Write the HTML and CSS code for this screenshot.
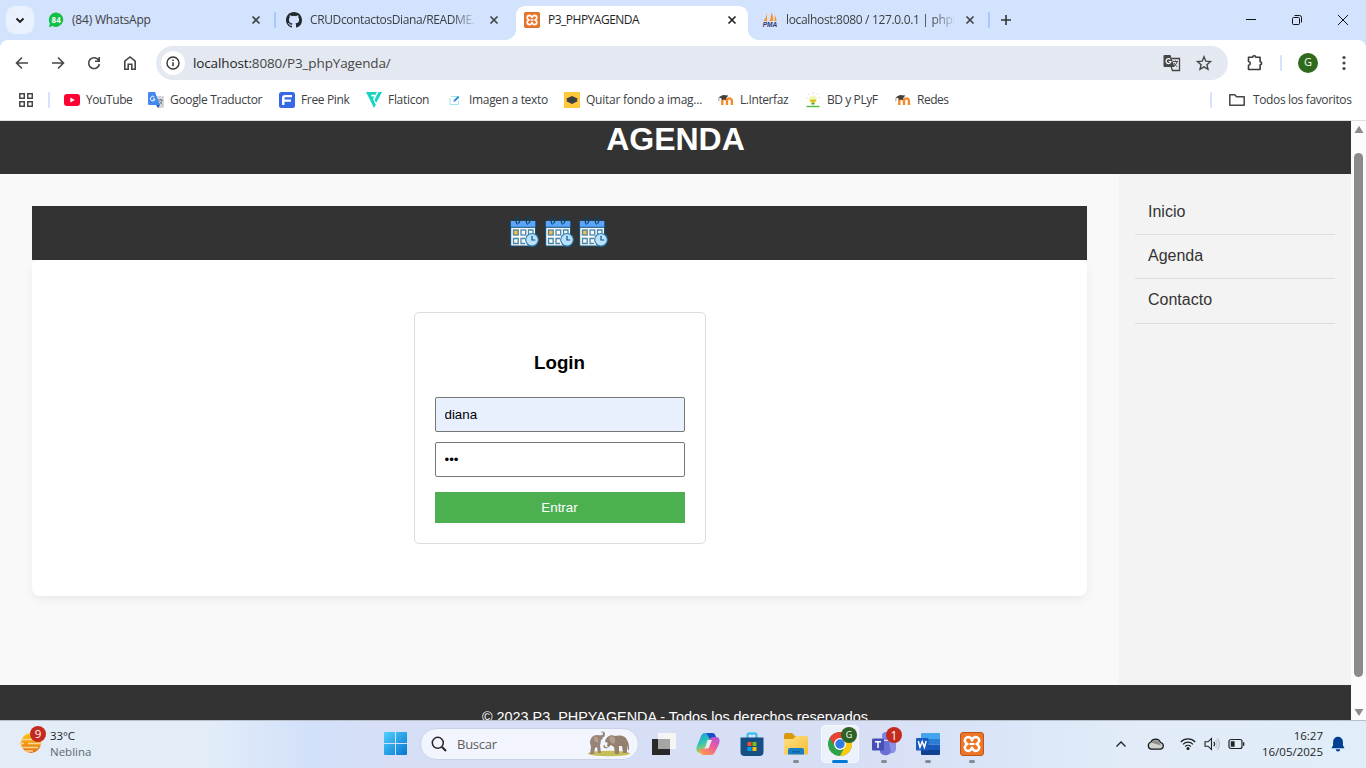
FILE: index.html
```html
<!DOCTYPE html>
<html lang="es">
<head>
<meta charset="utf-8">
<title>P3_PHPYAGENDA</title>
<link rel="stylesheet" href="styles.css">
</head>
<body>
<svg class="defs" width="0" height="0">
  <defs>
    <symbol id="close" viewBox="0 0 10 10"><path d="M1.500 1.500l7 7M8.500 1.500l-7 7" stroke="currentColor" stroke-width="1.600" fill="none"/></symbol>
    <symbol id="xampp" viewBox="0 0 24 24">
      <rect x=".5" y=".5" width="23" height="23" rx="2.500" fill="#ee7426" stroke="#bd5519"/>
      <path d="M12 8.300C12.800 6 14 5 15.800 5A3.500 3.500 0 0 1 19.200 8.500C19.200 10.300 18 11.200 16.500 12C18 12.800 19.200 13.700 19.200 15.500A3.500 3.500 0 0 1 15.800 19C14 19 12.800 18 12 15.700C11.200 18 10 19 8.200 19A3.500 3.500 0 0 1 4.800 15.500C4.800 13.700 6 12.800 7.500 12C6 11.200 4.800 10.300 4.800 8.500A3.500 3.500 0 0 1 8.200 5C10 5 11.200 6 12 8.300z" fill="none" stroke="#fff" stroke-width="2.500" stroke-linejoin="round"/>
      <path d="M9.500 12h5" stroke="#fff" stroke-width="2"/>
    </symbol>
    <symbol id="moodle" viewBox="0 0 16 16">
      <path d="M4.300 13V8.800a2.400 2.400 0 0 1 4.700 0V13M9 13V8.800a2.400 2.400 0 0 1 4.900 0V13" fill="none" stroke="#f58b2e" stroke-width="2.400"/>
      <path d="M.6 5.200L5 3l5.400.6-2.200 2.500-.4 2c-1.400-.9-2.700-.7-4 .2l-.2-1.900z" fill="#44403c"/>
      <path d="M1.200 5.400L.7 9.200" stroke="#777" stroke-width=".7"/>
    </symbol>
    <symbol id="calendar" viewBox="0 0 30 30">
      <rect x="1.600" y="4" width="25" height="25" rx="1" fill="#f7f8fa" stroke="#12537d" stroke-width="1.200"/>
      <path d="M2 4.300h24.200v5.900H2z" fill="#5ba5ff"/><path d="M1.600 10.300h25" stroke="#12537d"/>
      <path d="M8.500 7.500c-1.800-1.500-1.800-7 .6-7s2 6 0 5.500M18.600 7.500c-1.800-1.500-1.800-7 .6-7s2 6 0 5.500" fill="none" stroke="#0d4368" stroke-width="1.200"/>
      <g fill="none" stroke="#4a86a8" stroke-width="1.300"><rect x="4.500" y="13" width="4.700" height="5" fill="#fbba42"/><rect x="12" y="13" width="4.700" height="5"/><path d="M19.500 17v-4h4.500v3M4.500 21.500h4.700v5H4.500zM16 26.500h-4v-5h4"/></g>
      <circle cx="23" cy="22.800" r="6.300" fill="#b9e2ff" stroke="#2877a5" stroke-width="1.100"/>
      <path d="M23 18.700v4.300h3.300" fill="none" stroke="#12537d" stroke-width="1.200"/>
    </symbol>
    <linearGradient id="win" x1="0" y1="0" x2="1" y2="1"><stop stop-color="#4fd0ff"/><stop offset="1" stop-color="#0675ce"/></linearGradient>
    <linearGradient id="sun" x1="0" y1="0" x2="0" y2="1"><stop stop-color="#ffca18"/><stop offset="1" stop-color="#e66c12"/></linearGradient>
    <linearGradient id="fold" x1="0" y1="0" x2="1" y2="1"><stop stop-color="#ffe184"/><stop offset="1" stop-color="#f7bb35"/></linearGradient>
    <linearGradient id="copA" x1="0" y1="0" x2=".5" y2="1"><stop stop-color="#2292ef"/><stop offset=".5" stop-color="#2fc5b1"/><stop offset="1" stop-color="#f5d02c"/></linearGradient>
    <linearGradient id="copB" x1="1" y1="0" x2=".3" y2="1"><stop stop-color="#a854e5"/><stop offset=".5" stop-color="#ee5b9a"/><stop offset="1" stop-color="#ff954f"/></linearGradient>
  </defs>
</svg>

<div class="tabs">
  <div class="tab-menu"><svg width="20" height="20" viewBox="0 0 20 20"><path d="M6.500 8.500L10 12l3.500-3.500" fill="none" stroke="#1f1f1f" stroke-width="1.900"/></svg></div>
  <div class="tab t1">
    <svg class="fav" viewBox="0 0 16 16"><path d="M8 .5A7.200 7.200 0 1 1 4.500 14L.9 15.200l1-3.500A7.400 7.400 0 0 1 8 .5z" fill="#12c044"/><text x="8.200" y="10.900" text-anchor="middle" class="wa">84</text></svg>
    <span class="label l1">(84) WhatsApp</span><svg class="x"><use href="#close"/></svg>
  </div>
  <i class="sep"></i>
  <div class="tab t2">
    <svg class="fav" viewBox="0 0 16 16"><path fill="#24292f" d="M8 0C3.580 0 0 3.580 0 8c0 3.540 2.290 6.530 5.470 7.590.4.070.55-.17.55-.38 0-.19-.01-.82-.01-1.490-2.010.37-2.530-.49-2.690-.94-.09-.23-.48-.94-.82-1.130-.28-.15-.68-.52-.01-.53.630-.01 1.080.58 1.230.82.720 1.210 1.870.87 2.330.66.070-.52.280-.87.510-1.070-1.780-.2-3.640-.89-3.640-3.950 0-.87.310-1.590.82-2.150-.08-.2-.36-1.020.08-2.120 0 0 .67-.21 2.200.82a7.600 7.600 0 0 1 4 0c1.530-1.040 2.200-.82 2.200-.82.440 1.100.160 1.920.080 2.120.510.560.820 1.270.820 2.150 0 3.070-1.870 3.750-3.650 3.950.290.250.540.730.540 1.480 0 1.070-.01 1.930-.01 2.200 0 .21.150.46.550.38A8 8 0 0 0 16 8c0-4.420-3.580-8-8-8z"/></svg>
    <span class="label l2 fade">CRUDcontactosDiana/README.</span><svg class="x"><use href="#close"/></svg>
  </div>
  <div class="tab t3 active">
    <svg class="fav"><use href="#xampp"/></svg>
    <span class="label l3">P3_PHPYAGENDA</span><svg class="x"><use href="#close"/></svg>
  </div>
  <div class="tab t4">
    <svg class="fav" viewBox="0 0 16 16"><path d="M5 1v8H1.500C3.500 7 4.500 4 5 1zM9.300 0c1.500 3 2.400 6 1.800 9H7.300c1.700-2.500 2-6 2-9zM12.500 3c1.400 2 2 4 1.900 6h-2c.7-2 .5-4 .1-6z" fill="#f79424"/><text x="8" y="15" text-anchor="middle" class="pma">PMA</text></svg>
    <span class="label l4 fade">localhost:8080 / 127.0.0.1 | phpM</span><svg class="x"><use href="#close"/></svg>
  </div>
  <i class="sep"></i>
  <svg class="plus" viewBox="0 0 12 12"><path d="M6 1v10M1 6h10" stroke="#333" stroke-width="1.600"/></svg>
  <div class="winbtns">
    <svg viewBox="0 0 12 12"><path d="M1 5.500h10" stroke="#111"/></svg>
    <svg viewBox="0 0 12 12"><rect x="1.500" y="3.500" width="7" height="7" rx="1" fill="none" stroke="#111"/><path d="M3.500 1.500h5a2 2 0 0 1 2 2v5" fill="none" stroke="#111"/></svg>
    <svg viewBox="0 0 12 12"><path d="M1 1l10 10M11 1L1 11" stroke="#111"/></svg>
  </div>
</div>

<div class="chrome">
  <div class="toolbar">
    <svg class="nav" viewBox="0 0 16 16"><path d="M14 8H3M8 2.500L2.500 8 8 13.500"/></svg>
    <svg class="nav" viewBox="0 0 16 16"><path d="M2 8h11M8 2.500L13.500 8 8 13.500"/></svg>
    <svg class="nav" viewBox="0 0 16 16"><path d="M12.800 5.500A5.400 5.400 0 1 0 13.400 9M13.200 2v4.200H9"/></svg>
    <svg class="nav" viewBox="0 0 16 16"><path d="M2.800 6.200L8 2l5.200 4.200v8H9.800V9.300H6.200v4.900H2.800z"/></svg>
    <div class="omnibox">
      <span class="info"><svg viewBox="0 0 16 16"><circle cx="8" cy="8" r="6" fill="none" stroke="#333" stroke-width="1.400"/><path d="M8 7.300v4M8 4.400v1.500" stroke="#333" stroke-width="1.500"/></svg></span>
      <span class="url"><b>localhost:</b>8080/P3_phpYagenda/</span>
      <svg class="translate" viewBox="0 0 18 18"><path d="M1.500 1h6l4 12h-10A1 1 0 0 1 .5 12V2a1 1 0 0 1 1-1z" fill="#444746"/><path d="M8.500 4.500h8v12H9.500L8.200 13" fill="none" stroke="#444746" stroke-width="1.300"/><path d="M10 7.500h5M12.500 6.500v1M14 7.500c-.3 2-1.500 3.500-3 4.500M11 9c1 2 2 3 3.300 3.800" stroke="#444746" fill="none"/><path d="M7.400 5.400A2.500 2.500 0 1 0 8 7.500H5.700" stroke="#fff" stroke-width="1.200" fill="none"/></svg>
      <svg class="star" viewBox="0 0 16 16"><path d="M8 1.800l1.800 4.400 4.700.4-3.600 3.100 1.100 4.600L8 11.800l-4 2.500 1.100-4.600-3.600-3.100 4.700-.4z" fill="none" stroke="#444746" stroke-width="1.400"/></svg>
    </div>
    <svg class="puzzle" viewBox="0 0 18 18"><path d="M2.500 3.300h4.200c0-2 3-2 3 0h4.400v4.400c2 0 2 3 0 3v4.800H2.500v-4.200c2.300-.3 2.300-3.500 0-3.800z" fill="none" stroke="#3c3c3c" stroke-width="1.600" stroke-linejoin="round"/></svg>
    <i class="sep pale"></i>
    <span class="avatar">G</span>
    <svg class="dots" viewBox="0 0 4 16"><circle cx="2" cy="2.500" r="1.600"/><circle cx="2" cy="8" r="1.600"/><circle cx="2" cy="13.500" r="1.600"/></svg>
  </div>
  <div class="bookmarks">
    <svg class="apps" viewBox="0 0 14 14" fill="none" stroke="#444746" stroke-width="1.500"><path d="M.8.8h4.500v4.500H.8zM8.800.8h4.500v4.500H8.800zM.8 8.800h4.500v4.500H.8zM8.800 8.800h4.500v4.500H8.800z"/></svg>
    <i class="sep pale"></i>
    <div class="bm b1"><svg viewBox="0 0 16 16"><rect y="2" width="16" height="12" rx="3" fill="#f03"/><path d="M6.300 5.500L10.800 8l-4.500 2.500z" fill="#fff"/></svg><span>YouTube</span></div>
    <div class="bm b2"><svg viewBox="0 0 16 16"><path d="M7 4h8a1 1 0 0 1 1 1v10a1 1 0 0 1-1 1h-5z" fill="#d5d7da"/><path d="M1 0h6l5 13H1a1 1 0 0 1-1-1V1a1 1 0 0 1 1-1z" fill="#4688f1"/><path d="M8 13h4l-2 3z" fill="#2659b8"/><path d="M6.300 5A2.300 2.300 0 1 0 7 7H4.800" stroke="#fff" fill="none"/><path d="M10 8h5M12.500 7v1M14 8c-.3 2-1.500 3.500-2.600 4M11.500 9.500l3 3" stroke="#667883" stroke-width=".9" fill="none"/></svg><span>Google Traductor</span></div>
    <div class="bm b3"><svg viewBox="0 0 16 16"><rect width="16" height="16" rx="2.500" fill="#3668e8"/><path d="M3 13V6a3 3 0 0 1 3-3h7v2.300H6.500a1 1 0 0 0-1 1v1.200H12v2.300H5.500V13z" fill="#fff"/></svg><span>Free Pink</span></div>
    <div class="bm b4"><svg viewBox="0 0 16 16"><path d="M0 0h11L9.500 2.800H4.800l1 1.800h2.600L7 7.300l2.800 5.500L8 16zM12.500 0H16L10.200 11 8.500 7.800z" fill="#17d3c2"/></svg><span>Flaticon</span></div>
    <div class="bm b5"><svg viewBox="0 0 16 16"><path d="M4 4.500h7.500M3 6v6.500h8.500V9" fill="none" stroke="#9be5f3"/><path d="M6.500 9.800l.4-1.800L11 3.900l1.400 1.400-4.100 4z" fill="#2388df"/></svg><span>Imagen a texto</span></div>
    <div class="bm b6"><svg viewBox="0 0 16 16"><path fill="#ffc83d" d="M0 0h16v16H0z"/><path d="M8 4l6 2.700-1.500 1.200L14 9.100 8 12 2 9.100l1.500-1.200L2 6.700z" fill="#3d3e42"/></svg><span>Quitar fondo a imag...</span></div>
    <div class="bm b7"><svg><use href="#moodle"/></svg><span>L.Interfaz</span></div>
    <div class="bm b8"><svg viewBox="0 0 16 16"><path d="M1.500 14.500h13" stroke="#58bf45" stroke-width="1.500"/><path d="M4 3L3 1.500M8 2V0M12 3l1-1.500M2.500 6L1 5.500M13.500 6l1.500-.5" stroke="#fbcbc5"/><circle cx="8" cy="7.500" r="4" fill="#f5f5c4"/><path d="M5 7.500h6c0 4.500-6 4.500-6 0z" fill="#d5c51c"/><path d="M6.500 11h3v1.500h-3z" fill="#4f9e38"/></svg><span>BD y PLyF</span></div>
    <div class="bm b9"><svg><use href="#moodle"/></svg><span>Redes</span></div>
    <i class="sep pale right"></i>
    <svg class="folder" viewBox="0 0 18 16"><path d="M1.800 2.800h5l1.800 2h7.600v8.500H1.800z" fill="none" stroke="#444746" stroke-width="1.500" stroke-linejoin="round"/></svg>
    <span class="allfav">Todos los favoritos</span>
  </div>
</div>

<div class="viewport">
  <div class="page">
    <header class="head"><h1>AGENDA</h1></header>
    <div class="body">
      <main class="main">
        <div class="strip"><svg><use href="#calendar"/></svg><svg><use href="#calendar"/></svg><svg><use href="#calendar"/></svg></div>
        <section class="card">
          <form class="login">
            <h3>Login</h3>
            <input class="user" type="text" value="diana">
            <input class="pass" type="password" value="123">
            <button type="button">Entrar</button>
          </form>
        </section>
      </main>
      <nav class="side"><a>Inicio</a><a>Agenda</a><a>Contacto</a></nav>
    </div>
    <footer class="foot">© 2023 P3_PHPYAGENDA - Todos los derechos reservados.</footer>
  </div>
  <div class="scroll"><svg viewBox="0 0 10 8"><path d="M5 .8L9.500 8H.5z"/></svg><i></i><svg viewBox="0 0 10 8"><path d="M.5 0h9L5 7z"/></svg></div>
</div>

<div class="taskbar">
  <div class="weather">
    <svg width="28" height="30" viewBox="0 0 28 30"><circle cx="13" cy="17" r="10" fill="url(#sun)"/><path d="M4 13.500h11M10 17.500h14M1 17.500h5M3 21.500h17M7 25h8" stroke="#f7d795" stroke-width="1.500"/><circle cx="20" cy="8" r="8" fill="#c42b1c"/><text x="20" y="12" text-anchor="middle" class="badge">9</text></svg>
    <p><span>33°C</span><span class="dim">Neblina</span></p>
  </div>
  <div class="dock">
    <svg class="start" viewBox="0 0 23 23"><path d="M0 1a1 1 0 0 1 1-1h10v11H0zM12 0h10a1 1 0 0 1 1 1v10H12zM0 12h11v11H1a1 1 0 0 1-1-1zM12 12h11v10a1 1 0 0 1-1 1H12z" fill="url(#win)"/></svg>
    <div class="search">
      <svg class="lens" viewBox="0 0 16 16"><circle cx="6.800" cy="6.800" r="5.500" fill="none" stroke="#252525" stroke-width="1.500"/><path d="M11 11l4 4" stroke="#252525" stroke-width="1.900"/></svg>
      <span>Buscar</span>
      <svg class="elephants" viewBox="0 0 44 26"><ellipse cx="22" cy="22.500" rx="21" ry="2.800" fill="#c5bd55"/>
        <path d="M3 12c0-5 3-8 7-8 3 0 5 1 6-1 .5-1.500-1-2-2-1.300C14 0 18-.5 18 3c0 3-2 5-4 6-.5 2 0 3-1 5l1 8h-3l-1-6-2 1-1 6H3l1-7z" fill="#988578"/><path d="M7 6c3-1 5 1 4 5-2 1-4 0-4-5z" fill="#b39e90"/>
        <path d="M18 11c1-6 6-8 10-6 4-1 10-1 12 4 2 3 2 6 2 10h-1l-1-5 0 8h-4l-1-7h-3l0 8h-4l-1-7-3-2c-3 2-3 4-6 3-2-.5-2-3-.5-3l1 1.500c2-.5 2-2 2-4z" fill="#93806f"/><path d="M22 6c4-2 7 0 6 5-1 3-5 2-6-5z" fill="#b19c8e"/><path d="M15.500 7l4-1M18 15l3 1" stroke="#fff" stroke-width="1"/></svg>
    </div>
    <svg class="ic view" viewBox="0 0 26 26"><path d="M1 8h18v16H1z" fill="#292929"/><path d="M7 2h18v16H7z" fill="#f5f5f5"/><path d="M7 8h12v10H7z" fill="#a5a5a5"/></svg>
    <svg class="ic copilot" viewBox="0 0 26 26"><path d="M10 2h7c2 0 3 1 3.500 3L22 8h-4c-2 0-3 1-4 4l-2.500 7c-.8 2-2 3-4 3H5c-4 0-4-4-3-7L6 5c1-2 2-3 4-3z" fill="url(#copA)"/><path d="M10 2h7c2 0 3 1 3.500 3L22 8h-5c-2 0-3-.5-4-3s-1.500-3-3-3z" fill="#174fca"/><path d="M16 24H9c-2 0-3-1-4-4l-1-2h4c2 0 3-1 4-4l2.500-5c.8-2 2-3 4-3H21c4 0 4 4 3 7l-4 8c-1 2-2 3-4 3z" fill="url(#copB)"/><path d="M12.500 9h4.500l-3.500 8.500H9c2-1 2-4 3.500-8.500z" fill="#e8ecfa"/></svg>
    <svg class="ic store" viewBox="0 0 26 26"><path d="M8.500 7V4a1.500 1.500 0 0 1 1.500-1.500h6A1.500 1.500 0 0 1 17.500 4v3" fill="none" stroke="#27bdf2" stroke-width="2"/><path d="M1.500 6.500h23V21a4 4 0 0 1-4 4h-15a4 4 0 0 1-4-4z" fill="#154f84"/><path d="M8.500 11h4v4h-4z" fill="#f65321"/><path d="M13.500 11h4v4h-4z" fill="#7fbb10"/><path d="M8.500 16h4v4h-4z" fill="#00a2ed"/><path d="M13.500 16h4v4h-4z" fill="#ffba07"/></svg>
    <svg class="ic explorer" viewBox="0 0 26 26"><path d="M1 4a2 2 0 0 1 2-2h6l3 3h11v5H1z" fill="#d89910"/><path d="M1 8h9l3-3h10a2 2 0 0 1 2 2v15a1.500 1.500 0 0 1-1.500 1.500h-21A1.500 1.500 0 0 1 1 22z" fill="url(#fold)"/><path d="M5 23.500V19a2 2 0 0 1 2-2h12a2 2 0 0 1 2 2v4.500z" fill="#187fc5"/><path d="M9 20h8v1.500H9z" fill="#08609d"/></svg>
    <div class="cell"><svg class="ic chrome-ic" viewBox="0 0 26 26"><circle cx="13" cy="13" r="12" fill="#2fa34c"/><path d="M2.600 7A12 12 0 0 1 23.400 7L13 8.500 8.300 15.500z" fill="#e94235"/><path d="M23.400 7A12 12 0 0 1 13 25l5-9.500L17.500 8z" fill="#fdc914"/><path d="M13 7h10.400l-1-1.500z" fill="#e94235"/><circle cx="13" cy="13" r="6" fill="#fff"/><circle cx="13" cy="13" r="4.700" fill="#317be9"/></svg><span class="mini">G</span></div>
    <div class="cell2"><svg class="ic teams" viewBox="0 0 26 26"><circle cx="15" cy="5" r="4" fill="#7b83eb"/><path d="M9 10h12v9a6.500 6.500 0 0 1-12 2z" fill="#6971d5"/><path d="M18 10h7v8a4 4 0 0 1-5 4z" fill="#8990e5"/><rect x="1" y="7.500" width="12" height="12" rx="1.200" fill="#464eb8"/><path d="M4 10.700h6M7 10.700v6.300" stroke="#fff" stroke-width="1.500"/></svg><span class="one">1</span></div>
    <svg class="ic word" viewBox="0 0 26 26"><path d="M7 2h17a1 1 0 0 1 1 1v5H6V3a1 1 0 0 1 1-1z" fill="#42a5ee"/><path d="M6 8h19v5.500H6z" fill="#2b7cd3"/><path d="M6 13.500h19V19H6z" fill="#185abd"/><path d="M6 19h19v4a1 1 0 0 1-1 1H7a1 1 0 0 1-1-1z" fill="#103f91"/><rect x="1" y="7" width="12.500" height="12.500" rx="1" fill="#185abd"/><path d="M3.300 10l1.700 6.300L7.200 10.500l2.200 5.800L11.200 10" fill="none" stroke="#fff" stroke-width="1.500"/></svg>
    <svg class="ic xam" viewBox="-1 -1 26 26"><use href="#xampp" width="24" height="24"/></svg>
  </div>
  <div class="marks"><i></i><i class="on"></i><i></i><i></i><i></i></div>
  <div class="tray">
    <svg class="up" viewBox="0 0 12 8"><path d="M1.500 6.500L6 2l4.500 4.500" fill="none" stroke="#1f1f1f" stroke-width="1.300"/></svg>
    <svg class="cloud" viewBox="0 0 18 14"><path d="M4.500 12.200a3.700 3.700 0 0 1-.6-7.200 5.200 5.200 0 0 1 9.600.5 3.400 3.400 0 0 1 0 6.700z" fill="#d1d1d1" stroke="#171717" stroke-width="1.200"/><path d="M4 5.500a5 5 0 0 1 8.800.2L14 8.500z" fill="#8e8e8e"/></svg>
    <svg class="wifi" viewBox="0 0 16 14" fill="none" stroke="#222" stroke-width="1.200"><path d="M.8 5a10 10 0 0 1 14.400 0M3 7.300a7 7 0 0 1 10 0M5.200 9.500a4 4 0 0 1 5.600 0"/><circle cx="8" cy="11.500" r="1" fill="#222"/></svg>
    <svg class="vol" viewBox="0 0 16 14" fill="none" stroke="#222" stroke-width="1.100"><path d="M1 4.800h3L7.500 1.500v11L4 9.200H1zM9.700 4.800a3.300 3.300 0 0 1 0 4.400"/><path d="M11.500 3a6 6 0 0 1 0 8M13.300 1.300a8.500 8.500 0 0 1 0 11.400" stroke="#b4bbc2"/></svg>
    <svg class="bat" viewBox="0 0 17 12"><rect x="1" y="1.500" width="13" height="9" rx="2" fill="none" stroke="#222" stroke-width="1.200"/><path d="M2.800 3.300h3.800v5.400H2.800zM15 4.300h1.300v3.400H15z" fill="#222"/></svg>
    <p><span>16:27</span><span>16/05/2025</span></p>
    <svg class="bell" viewBox="0 0 14 16"><path d="M7 .8a4.900 4.900 0 0 1 4.900 4.900v3.600l1.600 3H.5l1.600-3V5.700A4.900 4.900 0 0 1 7 .8zM4.800 13.300h4.400a2.200 2.200 0 0 1-4.400 0z" fill="#003e92"/></svg>
  </div>
</div>
</body>
</html>
```
FILE: styles.css
```css
* { box-sizing: border-box; }
body { margin: 0; width: 1366px; height: 768px; overflow: hidden; display: flex; flex-direction: column; background: #d3e2fd; font: 12px "Open Sans", "Noto Sans", sans-serif; color: #3c4043; }
svg { display: block; flex: none; }
p, h1, h3 { margin: 0; }
.defs { position: absolute; }

/* Tab strip */
.tabs { height: 40px; flex: none; display: flex; align-items: center; padding-left: 6px; }
.tab-menu { width: 28px; height: 28px; border-radius: 9px; background: #eaf1fe; display: grid; place-items: center; margin-right: 14px; }
.tab { display: flex; align-items: center; height: 34px; }
.t1 { width: 226px; }
.t2 { width: 240px; padding-left: 10px; }
.t3 { width: 232px; padding-left: 8px; }
.t4 { width: 240px; padding-left: 14px; }
.tab .x { width: 10px; height: 10px; color: #3c4043; }
.fav { width: 16px; height: 16px; margin-right: 8px; }
.label { white-space: nowrap; height: 18px; line-height: 18px; flex: none; }
.l1 { width: 179px; letter-spacing: -.2px; }
.l2 { width: 165px; margin-right: 14px; letter-spacing: -.38px; }
.l3 { width: 179px; letter-spacing: -.5px; }
.l4 { width: 168px; margin-right: 11px; letter-spacing: -.33px; }
.fade { -webkit-mask-image: linear-gradient(90deg, #000 86%, transparent 102%); mask-image: linear-gradient(90deg, #000 86%, transparent 102%); }
.active { height: 34px; margin-top: 6px; padding-bottom: 6px; background: #fff; border-radius: 9px 9px 0 0; color: #1f1f1f; position: relative; }
.active .x { color: #1f1f1f; }
.active::before, .active::after { content: ""; position: absolute; bottom: 0; width: 10px; height: 10px; }
.active::before { left: -10px; background: radial-gradient(circle at 0 0, transparent 9.5px, #fff 10px); }
.active::after { right: -10px; background: radial-gradient(circle at 100% 0, transparent 9.5px, #fff 10px); }
.sep { width: 2px; height: 16px; background: #a8c7fa; flex: none; border-radius: 1px; }
.pale { background: #d3e3fd; }
.plus { width: 12px; height: 12px; margin-left: 10px; }
.winbtns { display: flex; gap: 34px; margin-left: auto; margin-right: 17px; }
.winbtns svg { width: 12px; height: 12px; }
.wa { font: bold 8px "Open Sans", sans-serif; fill: #fff; }
.pma { font: italic bold 6.5px "Liberation Sans", sans-serif; fill: #34366c; }

/* Toolbar and bookmarks */
.chrome { height: 81px; flex: none; background: #fff; border-radius: 8px 8px 0 0; border-bottom: 1px solid #dedfe1; }
.toolbar { height: 46px; display: flex; align-items: center; padding-left: 14px; }
.nav { width: 16px; height: 16px; margin-right: 20px; fill: none; stroke: #444746; stroke-width: 1.6; }
.omnibox { width: 1072px; height: 34px; border-radius: 17px; background: #e4e8f1; display: flex; align-items: center; margin-left: -2px; padding-left: 5px; flex: none; }
.info { width: 24px; height: 24px; border-radius: 50%; background: #fff; display: grid; place-items: center; }
.info svg { width: 16px; height: 16px; }
.url { font-size: 13.5px; letter-spacing: -.13px; margin-left: 8px; width: 970px; color: #474747; line-height: 20px; }
.url b { font-weight: 400; color: #1f1f1f; }
.translate { width: 18px; height: 18px; }
.star { width: 16px; height: 16px; margin-left: 15px; }
.puzzle { width: 18px; height: 18px; margin-left: 18px; }
.toolbar .sep { margin-left: 16px; }
.avatar { width: 20px; height: 20px; border-radius: 50%; background: #2f6a1d; color: #fff; font-size: 11px; line-height: 18px; text-align: center; margin-left: 16px; }
.dots { width: 4px; height: 16px; margin-left: 24px; fill: #444746; }
.bookmarks { height: 28px; display: flex; align-items: center; padding-left: 19px; }
.apps { width: 14px; height: 14px; margin-right: 15px; }
.bookmarks .sep { margin-right: 14px; }
.bm { display: flex; align-items: center; gap: 6px; flex: none; white-space: nowrap; line-height: 16px; }
.bm svg { width: 16px; height: 16px; }
.b1 { width: 84px; letter-spacing: -.42px; }
.b2 { width: 131px; letter-spacing: -.34px; }
.b3 { width: 87px; letter-spacing: -.34px; }
.b4 { width: 81px; letter-spacing: -.3px; }
.b5 { width: 117px; letter-spacing: -.33px; }
.b6 { width: 154px; letter-spacing: -.25px; }
.b7 { width: 87px; letter-spacing: -.42px; }
.b8 { width: 90px; letter-spacing: -.42px; }
.b9 { width: 60px; letter-spacing: -.5px; }
.bookmarks .right { margin-left: auto; margin-right: 16px; }
.folder { width: 18px; height: 16px; margin-right: 7px; }
.allfav { width: 113px; white-space: nowrap; letter-spacing: -.36px; line-height: 15px; margin-top: -1px; }

/* Web page */
.viewport { height: 599px; flex: none; display: flex; overflow: hidden; background: #f9f9f9; }
.page { width: 1351px; height: 599px; font-family: "Liberation Sans", Arial, sans-serif; display: flex; flex-direction: column; }
.head { height: 53px; flex: none; background: #333; color: #fff; text-align: center; }
.head h1 { font-size: 32px; line-height: 36px; }
.body { height: 511px; flex: none; display: flex; }
.main { width: 1119px; padding: 32px; }
.strip { height: 54px; background: #333; display: flex; justify-content: center; align-items: center; gap: 4.5px; padding: 0 2px 2px 0; }
.strip svg { width: 30px; height: 30px; }
.card { height: 336px; background: #fff; border-radius: 8px; box-shadow: 0 4px 10px rgba(0, 0, 0, .06); padding-top: 52px; }
.login { width: 292px; height: 232px; margin: 0 auto; border: 1px solid #ddd; border-radius: 5px; padding: 39px 20px 20px; color: #000; }
.login h3 { font-size: 18.72px; line-height: 22px; text-align: center; margin-bottom: 23px; }
.login input { display: block; width: 250px; height: 35px; margin: 0 0 10px; border: 1px solid #767676; border-radius: 2px; padding: 0 9px; font: 13.33px "Liberation Sans", Arial, sans-serif; color: #000; background: #fff; }
.login .user { background: #e8f0fe; }
.login .pass { margin-bottom: 15px; }
.login button { display: block; width: 250px; height: 31px; border: 0; background: #4caf50; color: #fff; font: 13.33px "Liberation Sans", Arial, sans-serif; }
.side { width: 232px; background: #f3f3f3; padding: 16.5px 16px; }
.side a { display: block; height: 44.4px; border-bottom: 1px solid #ddd; padding-left: 13px; font-size: 16px; line-height: 42px; color: #333; }
.foot { height: 35px; background: #333; color: #fff; text-align: center; font-size: 14.4px; line-height: 18px; padding: 23px 0 0 3px; flex: none; }
.scroll { width: 15px; background: #fcfcfc; display: flex; flex-direction: column; align-items: center; padding: 4px 0 3px; }
.scroll svg { width: 10px; height: 8px; fill: #8b8b8b; }
.scroll i { width: 9px; height: 524px; margin: 20px 0 auto; border-radius: 5px; background: #8b8b8b; }

/* Taskbar */
.taskbar { height: 48px; flex: none; border-top: 1px solid #b9bfca; background: linear-gradient(90deg, #e2edf7 0, #e2edf8 210px, #d2e0fa 310px, #d6dff6 380px, #d7dff5 860px, #dae5f8 1000px, #e1ecf8 1120px, #e1edf8); display: flex; position: relative; color: #1e1e1e; padding-bottom: 2px; }
.weather { width: 383px; display: flex; padding: 5px 0 0 11px; }
.weather svg { margin: 0 0 0 7px; }
.weather p { display: flex; flex-direction: column; margin: 2px 0 0 4px; font-size: 11.5px; line-height: 16px; letter-spacing: -.1px; }
.weather .dim { color: #606870; letter-spacing: 0; }
.badge { font: 11.5px "Open Sans", sans-serif; fill: #fff; }
.dock { width: 620px; display: flex; align-items: center; }
.start { width: 23px; height: 23px; margin-left: 1px; }
.search { width: 219px; height: 32px; border-radius: 16px; background: #f2f5fd; border: 1px solid #c9d2e6; margin: 0 12px 0 13px; display: flex; align-items: center; flex: none; padding-left: 10px; }
.lens { width: 16px; height: 16px; }
.search span { font-size: 13px; letter-spacing: -.25px; color: #5d5d5d; width: 141px; padding-left: 10px; }
.elephants { width: 44px; height: 26px; margin-left: -1px; }
.ic { width: 26px; height: 26px; }
.view { margin-right: 18px; }
.copilot, .store { margin-right: 18px; }
.explorer { margin-right: 12px; }
.cell { width: 38px; height: 38px; background: #edf1fb; border: 1px solid #f5f7fd; border-radius: 4px; display: grid; place-items: center; position: relative; margin-right: 12px; flex: none; }
.cell2 { position: relative; margin-right: 18px; }
.word { margin-right: 18px; }
.mini, .one { position: absolute; border-radius: 50%; width: 16px; height: 16px; background: #2f6323; color: #fff; font-size: 9px; display: grid; place-items: center; top: 1px; left: 19px; }
.one { background: #c42b1c; font-size: 12px; top: -4px; left: 15px; }
.marks { position: absolute; left: 793px; bottom: 5px; display: flex; align-items: center; gap: 38px; }
.marks i { width: 6px; height: 3px; border-radius: 2px; background: #848994; }
.marks .on { width: 16px; background: #0078d4; margin: 0 -5px; }
.tray { margin-left: auto; display: flex; align-items: center; padding-right: 21px; flex: none; }
.up { width: 12px; height: 8px; margin-right: 20px; }
.cloud { width: 18px; height: 14px; margin-right: 15px; }
.wifi { width: 16px; height: 14px; margin-right: 8px; }
.vol { width: 16px; height: 14px; margin-right: 8px; }
.bat { width: 17px; height: 12px; margin-right: 12px; }
.tray p { display: flex; flex-direction: column; text-align: right; font-size: 11.5px; line-height: 16px; letter-spacing: 0; width: 66px; margin-right: 8px; align-items: flex-end; }
.tray .up { margin-left: 0; }
.bell { width: 14px; height: 16px; }
```
